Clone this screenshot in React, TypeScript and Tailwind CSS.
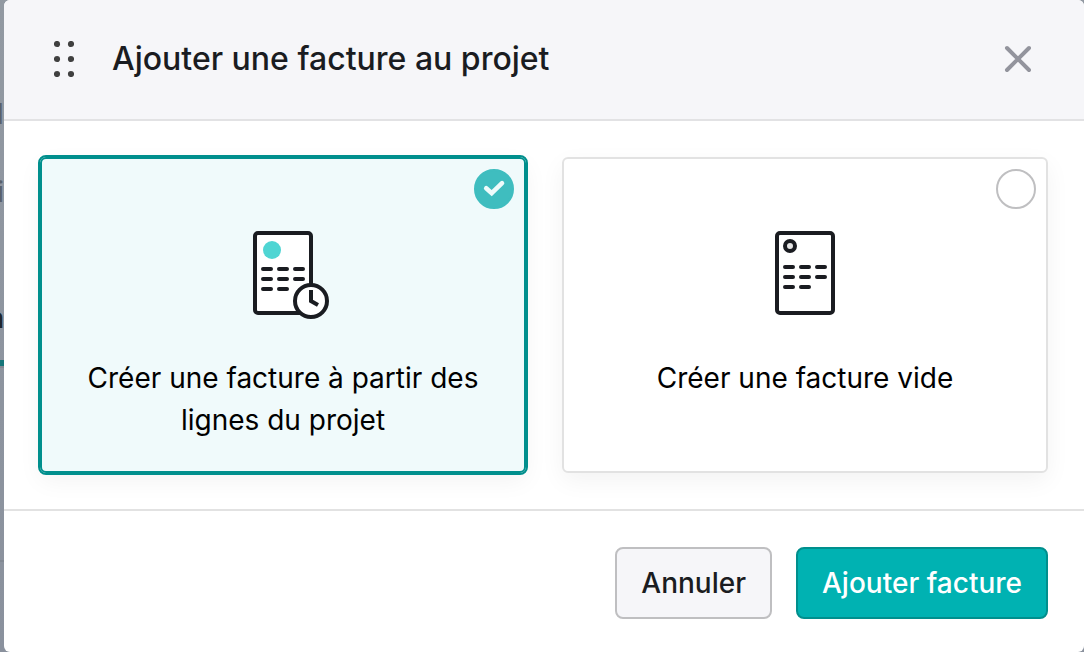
import { useState } from 'react';
import type { ReactNode } from 'react';
import clsx from 'clsx';

const textRows = [38, 48, 58];

function ProjectInvoiceIcon() {
  return (
    <svg width="60" height="84" viewBox="0 0 60 84" fill="none" className="overflow-visible" aria-hidden="true">
      <rect x="2" y="2" width="56" height="80" rx="3" fill="#fff" stroke="#1a1c21" strokeWidth="4" />
      <circle cx="19" cy="19" r="9" fill="#4fd5d3" />
      {textRows.map((y) => (
        <path
          key={y}
          d={y === 58 ? `M10 ${y}h8M26 ${y}h8` : `M10 ${y}h8M26 ${y}h8M42 ${y}h8`}
          stroke="#1a1c21"
          strokeWidth="4"
          strokeLinecap="round"
        />
      ))}
      <circle cx="58" cy="70" r="16" fill="#fff" stroke="#1a1c21" strokeWidth="4" />
      <path d="M58 59v11l7 4" stroke="#1a1c21" strokeWidth="4" />
    </svg>
  );
}

function EmptyInvoiceIcon() {
  return (
    <svg width="60" height="84" viewBox="0 0 60 84" fill="none" aria-hidden="true">
      <rect x="2" y="2" width="56" height="80" rx="3" fill="#fff" stroke="#1a1c21" strokeWidth="4" />
      <circle cx="15" cy="15" r="5" fill="#e6e6e6" stroke="#1a1c21" strokeWidth="4" />
      {textRows.map((row) => {
        const y = row - 2;
        return (
          <path
            key={y}
            d={row === 58 ? `M10 ${y}h8M26 ${y}h8` : `M10 ${y}h8M26 ${y}h8M42 ${y}h8`}
            stroke="#1a1c21"
            strokeWidth="4"
            strokeLinecap="round"
          />
        );
      })}
    </svg>
  );
}

type OptionCardProps = {
  value: string;
  label: string;
  icon: ReactNode;
  checked: boolean;
  onSelect: (value: string) => void;
};

function OptionCard({ value, label, icon, checked, onSelect }: OptionCardProps) {
  return (
    <label
      className={clsx(
        'relative flex flex-1 cursor-pointer flex-col items-center gap-[42px] rounded-md border-2 px-9 pt-18 pb-[30px] text-center shadow-[0_8px_24px_rgba(0,0,0,0.05)]',
        checked
          ? 'border-[#008f8d] bg-[#f0fafb] outline-2 outline-[#008f8d]'
          : 'border-[#e2e2e2] bg-white',
      )}
    >
      <input
        type="radio"
        name="invoice-type"
        value={value}
        checked={checked}
        onChange={() => onSelect(value)}
        className="absolute top-2.5 right-2.5 size-10 cursor-pointer appearance-none rounded-full border-2 border-[#bfbfc1] bg-white checked:border-[#3fbdbf] checked:bg-[#3fbdbf]"
      />
      {checked && (
        <svg
          width="40"
          height="40"
          viewBox="0 0 40 40"
          fill="none"
          className="pointer-events-none absolute top-2.5 right-2.5"
          aria-hidden="true"
        >
          <path d="M12.200 19.200l5.500 5L28 14.200" stroke="#effbfb" strokeWidth="4.600" strokeLinecap="round" />
        </svg>
      )}
      {icon}
      <span className="text-[28px] leading-[42px] text-black">{label}</span>
    </label>
  );
}

export default function App() {
  const [selected, setSelected] = useState('project');

  return (
    <div className="flex min-h-screen bg-linear-to-b from-[#9299a2] to-[#8a919d] font-['Inter',sans-serif]">
      {/* Dimmed page behind the dialog */}
      <div className="flex w-1 flex-col items-end overflow-hidden text-[28px] leading-10 text-[#59606b]" aria-hidden="true">
        <span className="mt-[94px]">H</span>
        <span className="mt-[38px]">i</span>
        <span className="mt-[86px] font-semibold text-[#20262c]">a</span>
        <div className="mt-[22px] h-[6px] w-full shrink-0 bg-[#17767a]" />
        <div className="h-0.5 w-full shrink-0 bg-[#828993]" />
        <div className="mt-48 h-0.5 w-full shrink-0 bg-[#828993]" />
      </div>

      <div role="dialog" aria-labelledby="dialog-title" className="flex flex-1 flex-col overflow-hidden rounded-md bg-white">
        <header className="flex min-h-[121px] items-center gap-6 border-b-2 border-[#e2e2e4] bg-[#f6f6f9] px-9 pb-px">
          <button type="button" aria-label="Déplacer" className="flex size-12 cursor-move items-center justify-center">
            <svg width="20" height="36" viewBox="0 0 20 36" fill="#404040">
              {[3, 18, 33].map((y) => (
                <g key={y}>
                  <circle cx="3" cy={y} r="3.100" />
                  <circle cx="17" cy={y} r="3.100" />
                </g>
              ))}
            </svg>
          </button>
          <h1 id="dialog-title" className="flex-1 text-[32px] leading-12 font-medium text-[#1a1c21]">
            Ajouter une facture au projet
          </h1>
          <button type="button" aria-label="Fermer" className="flex size-15 cursor-pointer items-center justify-center">
            <svg width="28" height="28" viewBox="0 0 28 28" fill="none" stroke="#93949d" strokeWidth="4" strokeLinecap="round">
              <path d="M3 3l22 22M25 3L3 25" />
            </svg>
          </button>
        </header>

        <div className="flex gap-9 border-b-2 border-[#e2e2e2] p-9">
          <OptionCard
            value="project"
            label="Créer une facture à partir des lignes du projet"
            icon={<ProjectInvoiceIcon />}
            checked={selected === 'project'}
            onSelect={setSelected}
          />
          <OptionCard
            value="empty"
            label="Créer une facture vide"
            icon={<EmptyInvoiceIcon />}
            checked={selected === 'empty'}
            onSelect={setSelected}
          />
        </div>

        <footer className="flex justify-end gap-6 px-9 pt-9 pb-8 text-[28px] leading-10 font-medium">
          <button
            type="button"
            className="cursor-pointer rounded-lg border-2 border-[#bfbfc1] bg-[#f6f6f9] px-6 py-3.5 text-[#1a1c21]"
          >
            Annuler
          </button>
          <button
            type="button"
            className="cursor-pointer rounded-lg border-2 border-[#008f8d] bg-[#00b2b2] px-6 py-3.5 text-white"
          >
            Ajouter facture
          </button>
        </footer>
      </div>
    </div>
  );
}
